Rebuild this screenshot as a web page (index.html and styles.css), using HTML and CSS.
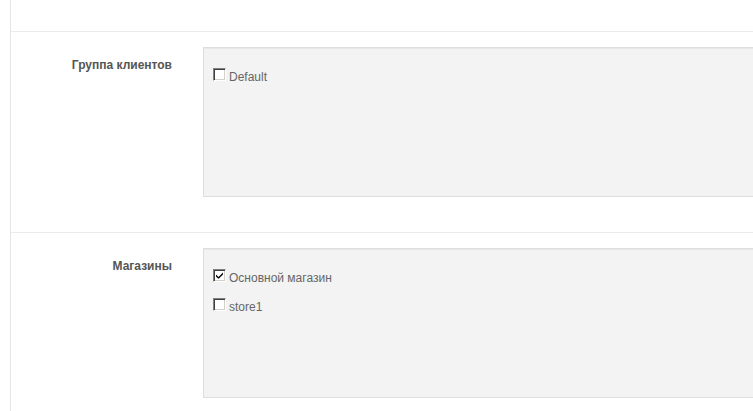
FILE: index.html
```html
<!DOCTYPE html>
<html lang="ru">
<head>
<meta charset="utf-8">
<title>Form</title>
<link rel="stylesheet" href="styles.css">
</head>
<body>
<div class="panel">
  <div class="top"></div>
  <div class="row">
    <div class="label">Группа клиентов</div>
    <div class="well">
      <div class="item"><span class="cb"></span>Default</div>
    </div>
  </div>
  <div class="row">
    <div class="label">Магазины</div>
    <div class="well">
      <div class="item"><span class="cb"><svg class="tick" width="9" height="9" viewBox="0 0 9 9"><path d="M1 3.5 L1 5.5 L3 7.5 L4 7.5 L8 3.5 L8 1.5 L3.5 6 Z" fill="#000"/></svg></span>Основной магазин</div>
      <div class="item"><span class="cb"></span>store1</div>
    </div>
  </div>
</div>
</body>
</html>
```

FILE: styles.css
```css
html, body {
  margin: 0;
  padding: 0;
  background: #fff;
  font-family: "Liberation Sans", Arial, sans-serif;
  font-size: 12px;
  overflow: hidden;
}
.panel {
  margin-left: 10px;
  border-left: 1px solid #e6e6e6;
  min-height: 411px;
}
.top {
  height: 31px;
}
.row {
  display: flex;
  border-top: 1px solid #ebebeb;
  padding: 15px 0 35px;
}
.label {
  width: 161px;
  flex: none;
  padding-right: 31px;
  padding-top: 11px;
  text-align: right;
  font-weight: bold;
  color: #555;
  line-height: 14px;
}
.well {
  flex: 1;
  height: 150px;
  box-sizing: border-box;
  background: #f3f3f3;
  border: 1px solid #dedede;
  box-shadow: inset 0 1px 1px rgba(0,0,0,0.05);
  padding: 20px 9px;
  margin-right: -20px;
}
.item {
  color: #666;
  line-height: 14px;
  margin-bottom: 13px;
}
.cb {
  display: inline-block;
  width: 13px;
  height: 13px;
  box-sizing: border-box;
  border: 1px solid;
  border-color: #808080 #fff #fff #808080;
  box-shadow: inset 1px 1px 0 #404040, inset -1px -1px 0 #d4d0c8;
  background: #fff;
  vertical-align: baseline;
  margin-right: 3px;
  position: relative;
}
.tick {
  position: absolute;
  left: 1px;
  top: 1px;
}
```
